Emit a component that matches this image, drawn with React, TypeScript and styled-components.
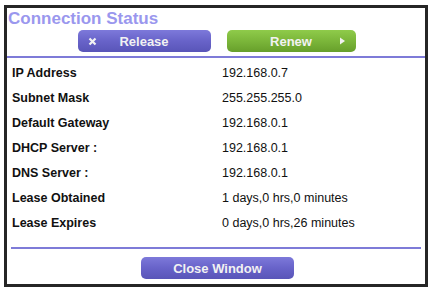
import React from "react";
import styled, { createGlobalStyle } from "styled-components";

const GlobalStyle = createGlobalStyle`
  body {
    margin: 0;
    background: #ffffff;
    font-family: "Liberation Sans", Arial, sans-serif;
  }
`;

const Frame = styled.div`
  box-sizing: border-box;
  margin: 5px 0 0 4px;
  width: 424px;
  height: 282px;
  border: 3px solid #262626;
  display: flex;
  flex-direction: column;
`;

const Title = styled.h1`
  margin: 0;
  padding: 1px 0 0 1px;
  height: 21px;
  font-size: 17px;
  font-weight: bold;
  line-height: 20px;
  color: #9a97ee;
`;

const ButtonRow = styled.div`
  display: flex;
  justify-content: center;
  gap: 16px;
  padding-left: 1px;
`;

const Button = styled.button<{ $tone: "purple" | "green"; $w: number }>`
  box-sizing: border-box;
  width: ${(p) => p.$w}px;
  height: 22px;
  border: none;
  border-radius: 5px;
  padding: 0 10px;
  display: flex;
  align-items: center;
  font-family: "Liberation Sans", Arial, sans-serif;
  font-size: 13px;
  font-weight: bold;
  color: #f2f2f2;
  background: ${(p) =>
    p.$tone === "purple"
      ? "linear-gradient(#7d79da, #6863c9 50%, #5955b8)"
      : "linear-gradient(#8fcb4a, #7bb63a 50%, #679f2b)"};
`;

const ButtonLabel = styled.span`
  flex: 1;
  text-align: center;
`;

const Divider = styled.div<{ $inset: number }>`
  height: 2px;
  margin: 0 ${(p) => p.$inset}px;
  background: #7e7bd8;
`;

const Table = styled.div`
  display: flex;
  flex-direction: column;
  padding: 2px 0 0 5px;
  flex: 1;
`;

const Row = styled.div`
  display: grid;
  grid-template-columns: 210px 1fr;
  height: 25px;
  align-items: center;
  font-size: 12.5px;
  color: #111;
`;

const Label = styled.span`
  font-weight: bold;
`;

const Footer = styled.div`
  display: flex;
  justify-content: center;
  padding: 8px 0 5px 3px;
`;

const rows: [string, string][] = [
  ["IP Address", "192.168.0.7"],
  ["Subnet Mask", "255.255.255.0"],
  ["Default Gateway", "192.168.0.1"],
  ["DHCP Server :", "192.168.0.1"],
  ["DNS Server :", "192.168.0.1"],
  ["Lease Obtained", "1 days,0 hrs,0 minutes"],
  ["Lease Expires", "0 days,0 hrs,26 minutes"],
];

export default function App() {
  return (
    <>
      <GlobalStyle />
      <Frame>
        <Title>Connection Status</Title>
        <ButtonRow>
          <Button $tone="purple" $w={133}>
            <svg width="9" height="9" viewBox="0 0 9 9">
              <path d="M1.5 1.5 L7.5 7.5 M7.5 1.5 L1.5 7.5" stroke="#f2f2f2" strokeWidth="2.2" />
            </svg>
            <ButtonLabel>Release</ButtonLabel>
            <span style={{ width: 9 }} />
          </Button>
          <Button $tone="green" $w={129}>
            <span style={{ width: 7 }} />
            <ButtonLabel>Renew</ButtonLabel>
            <svg width="7" height="8" viewBox="0 0 7 8">
              <path d="M1 0.5 L6 4 L1 7.5 Z" fill="#f2f2f2" />
            </svg>
          </Button>
        </ButtonRow>
        <div style={{ height: 4 }} />
        <Divider $inset={0} />
        <Table>
          {rows.map(([k, v]) => (
            <Row key={k}>
              <Label>{k}</Label>
              <span>{v}</span>
            </Row>
          ))}
        </Table>
        <Divider $inset={4} />
        <Footer>
          <Button $tone="purple" $w={153}>
            <ButtonLabel>Close Window</ButtonLabel>
          </Button>
        </Footer>
      </Frame>
    </>
  );
}
